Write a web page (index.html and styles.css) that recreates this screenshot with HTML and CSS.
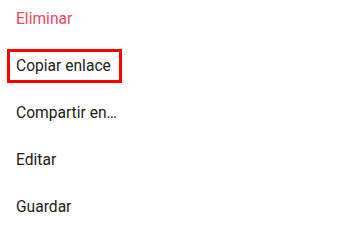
FILE: index.html
```html
<!DOCTYPE html>
<html>
<head>
<meta charset="utf-8">
<link rel="stylesheet" href="styles.css">
</head>
<body>
<ul class="menu">
  <li class="item danger"><span class="label">Eliminar</span></li>
  <li class="item"><span class="label highlight">Copiar enlace</span></li>
  <li class="item"><span class="label">Compartir en…</span></li>
  <li class="item"><span class="label">Editar</span></li>
  <li class="item"><span class="label">Guardar</span></li>
</ul>
</body>
</html>
```
FILE: styles.css
```css
html, body {
  margin: 0;
  padding: 0;
  background: #ffffff;
}
body {
  width: 350px;
  height: 224px;
  overflow: hidden;
  font-family: Roboto, "Noto Sans", sans-serif;
}
.menu {
  list-style: none;
  margin: -5px 0 0 0;
  padding: 0;
}
.item {
  height: 47px;
  display: flex;
  align-items: center;
  padding-left: 16px;
  font-size: 15.6px;
  color: #212121;
}
.danger {
  color: #e8475a;
}
.highlight {
  border: 3px solid #ff0000;
  padding: 5px 8px 5px 6px;
  margin-left: -9px;
}
```
